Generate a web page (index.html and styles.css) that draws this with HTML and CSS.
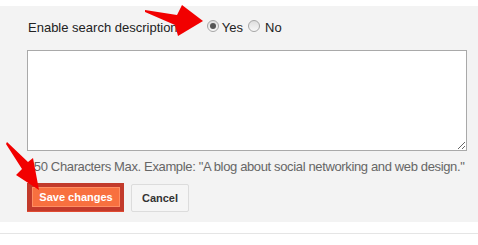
FILE: index.html
```html
<!DOCTYPE html>
<html>
<head>
<meta charset="utf-8">
<link rel="stylesheet" href="styles.css">
</head>
<body>
<div class="page">
  <div class="panel">
    <div class="row">
      <span class="label">Enable search description?</span>
      <span class="radio checked"></span><span class="opt">Yes</span>
      <span class="radio second"></span><span class="opt">No</span>
    </div>
    <textarea class="desc"></textarea>
    <div class="help">150 Characters Max. Example: "A blog about social networking and web design."</div>
    <div class="actions">
      <span class="frame"><button class="save">Save changes</button></span>
      <button class="cancel">Cancel</button>
    </div>
  </div>
  <div class="rule"></div>
  <svg class="arrows" width="478" height="245" viewBox="0 0 478 245">
    <polygon points="145,10 177,15 182,5 203,21 178,36 175,25 145,12" fill="#f20000"/>
    <polygon points="7,142 28,162 33,158 39,190 16,175 22,169 6,144" fill="#f20000"/>
  </svg>
</div>
</body>
</html>
```

FILE: styles.css
```css
html, body {
  margin: 0;
  padding: 0;
  background: #fff;
}
.page {
  position: relative;
  width: 478px;
  height: 245px;
  font-family: "Liberation Sans", Arial, sans-serif;
  padding-top: 6px;
  box-sizing: border-box;
}
.panel {
  background: #f3f3f3;
  height: 216px;
  box-sizing: border-box;
  padding: 13px 0 0 27px;
  display: flex;
  flex-direction: column;
  align-items: flex-start;
}
.row {
  display: flex;
  align-items: flex-start;
  height: 18px;
  line-height: 18px;
  font-size: 13px;
  color: #222;
}
.label {
  margin-left: 1px;
  margin-right: 22px;
}
.radio {
  width: 12px;
  height: 12px;
  box-sizing: border-box;
  border-radius: 50%;
  border: 1px solid #a6a6a6;
  background: linear-gradient(#dedede, #f8f8f8);
  margin-top: 1px;
  margin-right: 3px;
  position: relative;
}
.radio.second {
  margin-left: 1px;
  margin-right: 5px;
}
.radio.checked::after {
  content: "";
  position: absolute;
  left: 2px;
  top: 2px;
  width: 6px;
  height: 6px;
  border-radius: 50%;
  background: #555;
}
.opt {
  margin-right: 4px;
}
.desc {
  margin: 13px 0 0 0;
  width: 440px;
  height: 101px;
  box-sizing: border-box;
  border: 1px solid #a9a9a9;
  background: #fff;
  padding: 2px;
  resize: both;
  outline: none;
}
.help {
  margin-top: 7px;
  font-size: 13px;
  letter-spacing: -0.36px;
  line-height: 18px;
  color: #666;
  white-space: nowrap;
}
.actions {
  margin-top: 7px;
  display: flex;
  align-items: flex-start;
  gap: 7px;
}
.frame {
  display: block;
  background: #c23a2b;
  padding: 4px 4px 4px 5px;
  border-bottom: 1px solid #e04a32;
}
.save {
  display: block;
  margin: 0;
  height: 20px;
  width: 88px;
  padding: 0;
  border: 1px solid #ff8e63;
  background: #f8703f;
  color: #fff;
  font-family: "Liberation Sans", Arial, sans-serif;
  font-weight: bold;
  font-size: 11px;
  line-height: 18px;
}
.cancel {
  margin: 1px 0 0 0;
  height: 28px;
  width: 58px;
  padding: 0;
  border: 1px solid #dcdcdc;
  border-radius: 2px;
  background: #f5f5f5;
  color: #333;
  font-family: "Liberation Sans", Arial, sans-serif;
  font-weight: bold;
  font-size: 11px;
}
.rule {
  margin-top: 11px;
  height: 1px;
  background: #e5e5e5;
}
.arrows {
  position: absolute;
  left: 0;
  top: 0;
  pointer-events: none;
}
```
